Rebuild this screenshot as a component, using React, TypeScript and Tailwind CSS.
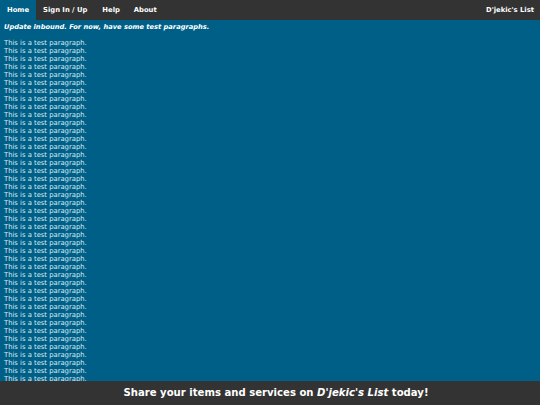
import React from "react";

const navItems = ["Home", "Sign In / Up", "Help", "About"];

export default function App() {
  const paragraphs = Array.from({ length: 46 }, (_, i) => i);

  return (
    <div className="h-screen overflow-hidden bg-[#005f87] text-[#d6ebf3] font-['DejaVu_Sans',sans-serif]">
      {/* Header */}
      <header className="flex items-stretch justify-between h-[20px] bg-[#333333] text-white">
        <nav className="flex">
          {navItems.map((item, i) => (
            <a
              key={item}
              className={`flex items-center px-[7px] text-[6.8px] font-bold ${i === 0 ? "bg-[#005f87]" : ""} ${i === 2 ? "ml-[1px]" : ""}`}
            >
              {item}
            </a>
          ))}
        </nav>
        <div className="flex items-center px-[6px] text-[6.8px] font-bold">D'jekic's List</div>
      </header>

      {/* Content */}
      <main className="px-[4px]">
        <p className="pt-[3px] text-[6.7px] leading-[8px] font-bold italic text-white">
          Update inbound. For now, have some test paragraphs.
        </p>
        <div className="mt-[8px]">
          {paragraphs.map((i) => (
            <p key={i} className="text-[6.8px] leading-[8px]">
              This is a test paragraph.
            </p>
          ))}
        </div>
      </main>

      {/* Footer */}
      <footer className="fixed bottom-0 left-0 right-0 h-[24px] flex items-center justify-center pl-[12px] bg-[#333333] text-white text-[10.1px] font-bold">
        <span>
          Share your items and services on <i>D'jekic's List</i> today!
        </span>
      </footer>
    </div>
  );
}
